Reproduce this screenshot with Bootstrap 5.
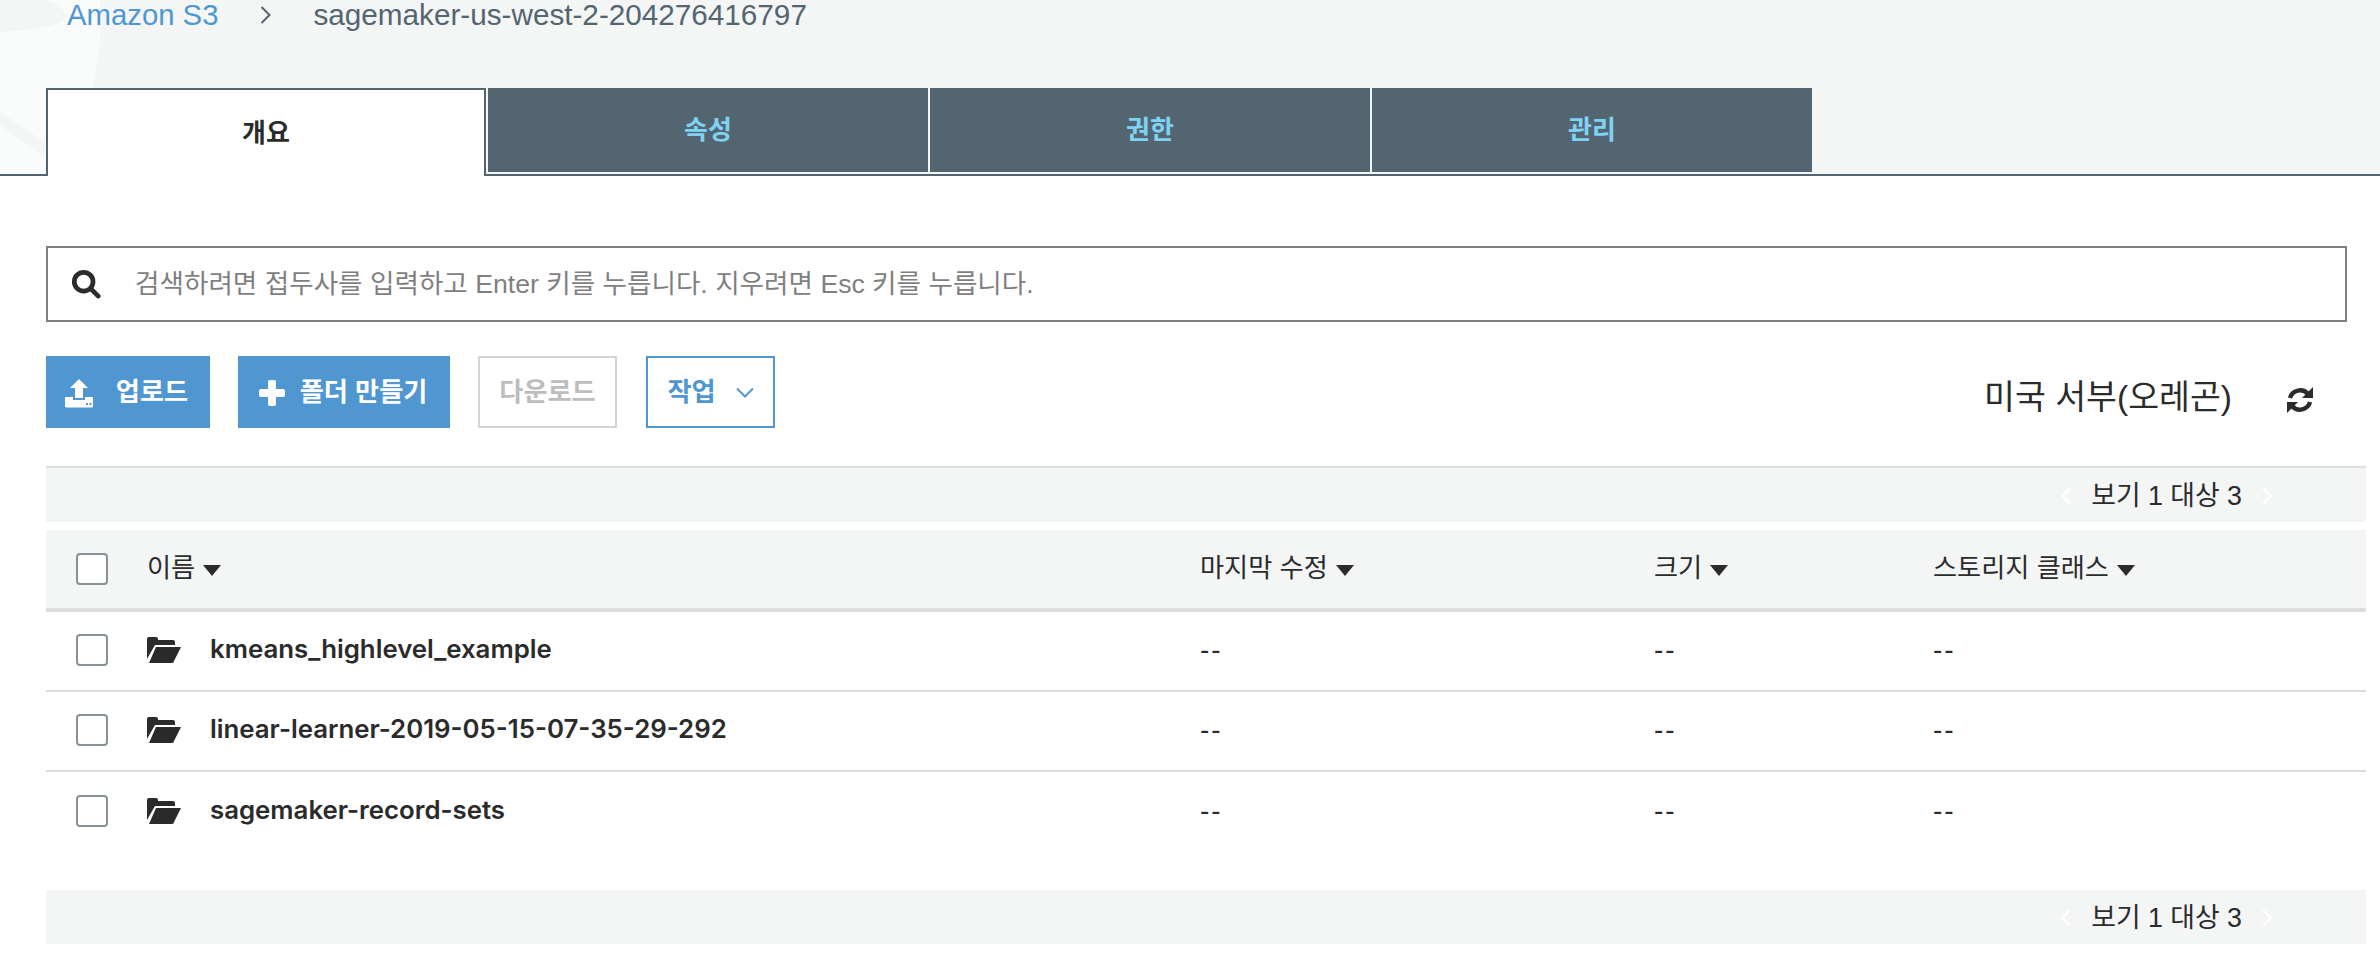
<!DOCTYPE html>
<html lang="ko">
<head>
<meta charset="utf-8">
<title>Amazon S3</title>
<link href="https://cdn.jsdelivr.net/npm/bootstrap@5.3.0/dist/css/bootstrap.min.css" rel="stylesheet">
<style>
html,body{height:964px;overflow:hidden}
body{background:#fff;color:#2b2b2b;font-family:"Liberation Sans","Noto Sans CJK KR",sans-serif;font-size:26px}
.s3-head{height:176px;background:#f4f6f6;border-bottom:2px solid #546572;position:relative}
.s3-swirl{position:absolute;left:0;top:0}
.s3-crumb{height:30px;padding-left:67px;gap:42px;font-size:29.3px;line-height:30px;color:#546572;position:relative;white-space:nowrap}
.s3-crumb a{color:#4f97d3;text-decoration:none}
.s3-bucket{font-size:29.7px}
.s3-tabs{position:absolute;left:46px;top:88px;height:86px;gap:2px}
.s3-tab{width:440px;height:84px;background:#546572;color:#7fd3f2;font-weight:700;font-size:26px;text-decoration:none}
.s3-tab.on{background:#fff;color:#2b2b2b;height:88px;border:2px solid #546572;border-bottom:0}
.s3-main{padding:70px 14px 0 46px}
.s3-search{height:76px;margin-right:19px;border:2px solid #7f7f7f;padding-left:23px;gap:34px;color:#7f7f7f;font-size:26.6px}
.s3-search span{padding-top:2px}
.s3-bar{margin-top:34px;height:72px;margin-right:19px}
.s3-btn{height:72px;border-radius:0;font-size:26.2px;font-weight:700;padding:2px 0 0;gap:15px;border:2px solid #5097d2;white-space:nowrap}
.s3-b1{width:164px;background:#5097d2;color:#fff;gap:22px;padding-right:4px}
.s3-b2{width:212px;background:#5097d2;color:#fff;margin-left:28px;padding-right:2px}
.s3-b3{width:139px;background:#fff;color:#bdbdbd;border-color:#d4d4d4;margin-left:28px}
.s3-b4{width:129px;background:#fff;color:#5097d2;margin-left:29px;gap:20px}
.s3-region{font-size:33.6px;color:#2b2b2b;margin-left:auto;margin-right:54px;margin-top:12px}
.s3-refresh{margin-right:33px;margin-top:15px}
.s3-pager{height:56px;background:#f4f6f6;border-top:2px solid #e0e0e0;margin-top:38px;padding-right:93px;gap:19px;font-size:26.8px;padding-top:2px}
.s3-pager.end{height:54px;border-top:0;margin-top:38px}
.s3-thead{height:82px;margin-top:8px;background:#f4f6f6;border-bottom:4px solid #ddd;font-size:26.2px}
.s3-row{height:80px;border-bottom:2px solid #ddd;font-size:28px;padding-bottom:3px}
.s3-row.last{border-bottom:0}
.s3-c0{width:101px;padding-left:30px}
.s3-c1{width:1053px}
.s3-c2{width:454px}
.s3-c3{width:279px}
.s3-dash{letter-spacing:2px}
.s3-check{width:32px;height:32px;border:2px solid #879196;border-radius:4px;background:#fff;display:block}
.s3-name{font-family:Inter,"Liberation Sans",sans-serif;font-weight:600;gap:29px;font-size:25.8px}
.s3-sort{display:inline-block;width:0;height:0;border-left:9.500px solid transparent;border-right:9.500px solid transparent;border-top:11px solid #2b2b2b;margin-left:8px;vertical-align:middle}
</style>
</head>
<body>
<header class="s3-head">
  <svg class="s3-swirl" width="100" height="174" viewBox="0 0 100 174"><path d="M0 32C40 30 66 24 66 16C66 8 50 0 40 0H100C104 30 98 60 92 88H46V174H0Z" fill="#fafcfc"/><path d="M0 112L46 143V158L0 125Z" fill="#f4f6f6"/></svg>
  <nav class="s3-crumb d-flex align-items-center">
    <a href="#">Amazon S3</a>
    <svg width="11" height="20" viewBox="0 0 11 20" fill="none" stroke="#546572" stroke-width="2"><path d="M1.500 2l8 8-8 8"/></svg>
    <span class="s3-bucket">sagemaker-us-west-2-204276416797</span>
  </nav>
  <div class="s3-tabs d-flex">
    <a href="#" class="s3-tab on d-flex align-items-center justify-content-center">개요</a>
    <a href="#" class="s3-tab d-flex align-items-center justify-content-center">속성</a>
    <a href="#" class="s3-tab d-flex align-items-center justify-content-center">권한</a>
    <a href="#" class="s3-tab d-flex align-items-center justify-content-center">관리</a>
  </div>
</header>
<main class="s3-main">
  <div class="s3-search d-flex align-items-center">
    <svg width="30" height="30" viewBox="0 0 32 32" fill="none" stroke="#2b2b2b"><circle cx="13.500" cy="13.500" r="10" stroke-width="5"/><path d="M21 21l8 8" stroke-width="5" stroke-linecap="round"/></svg>
    <span>검색하려면 접두사를 입력하고 Enter 키를 누릅니다. 지우려면 Esc 키를 누릅니다.</span>
  </div>
  <div class="s3-bar d-flex align-items-center">
    <button class="btn s3-btn s3-b1 d-flex align-items-center justify-content-center">
      <svg width="30" height="30" viewBox="0 0 30 30" fill="#fff"><path d="M15 1l9 9h-5v10h-8V10H6z"/><path fill-rule="evenodd" d="M1 19h8v3h12v-3h8v9a1.500 1.500 0 0 1-1.500 1.500h-25A1.500 1.500 0 0 1 1 28zM22 25h2v2h-2zM25.500 25h2v2h-2z"/></svg>
      <span>업로드</span>
    </button>
    <button class="btn s3-btn s3-b2 d-flex align-items-center justify-content-center">
      <svg width="26" height="26" viewBox="0 0 26 26" fill="#fff"><path d="M9 2a2 2 0 0 1 2-2h4a2 2 0 0 1 2 2v7h7a2 2 0 0 1 2 2v4a2 2 0 0 1-2 2h-7v7a2 2 0 0 1-2 2h-4a2 2 0 0 1-2-2v-7H2a2 2 0 0 1-2-2v-4a2 2 0 0 1 2-2h7z"/></svg>
      <span>폴더 만들기</span>
    </button>
    <button class="btn s3-btn s3-b3">다운로드</button>
    <button class="btn s3-btn s3-b4 d-flex align-items-center justify-content-center">
      <span>작업</span>
      <svg width="18" height="12" viewBox="0 0 18 12" fill="none" stroke="#5097d2" stroke-width="2"><path d="M1 1.500l8 8 8-8"/></svg>
    </button>
    <span class="s3-region">미국 서부(오레곤)</span>
    <svg width="28" height="28" viewBox="0 0 28 28" fill="none" stroke="#2b2b2b" class="s3-refresh">
      <path d="M4 12A10.500 10.500 0 0 1 22 8" stroke-width="4.500"/><path d="M27 1v11H16z" fill="#2b2b2b" stroke="none"/>
      <path d="M24 16A10.500 10.500 0 0 1 6 20" stroke-width="4.500"/><path d="M1 27V16h11z" fill="#2b2b2b" stroke="none"/>
    </svg>
  </div>
  <div class="s3-pager d-flex align-items-center justify-content-end">
    <svg width="12" height="20" viewBox="0 0 12 20" fill="none" stroke="#fff" stroke-width="2"><path d="M10 2l-8 8 8 8"/></svg>
    <span>보기 1 대상 3</span>
    <svg width="12" height="20" viewBox="0 0 12 20" fill="none" stroke="#fff" stroke-width="2"><path d="M2 2l8 8-8 8"/></svg>
  </div>
  <div class="s3-thead d-flex align-items-center">
    <div class="s3-c0"><span class="s3-check"></span></div>
    <div class="s3-c1">이름<i class="s3-sort"></i></div>
    <div class="s3-c2">마지막 수정<i class="s3-sort"></i></div>
    <div class="s3-c3">크기<i class="s3-sort"></i></div>
    <div>스토리지 클래스<i class="s3-sort"></i></div>
  </div>
  <div class="s3-row d-flex align-items-center">
    <div class="s3-c0"><span class="s3-check"></span></div>
    <div class="s3-c1 s3-name d-flex align-items-center">
      <svg width="34" height="26" viewBox="0 0 34 26" fill="#2b2b2b"><path d="M0 2a2 2 0 0 1 2-2h7a2 2 0 0 1 2 2v1h15a2 2 0 0 1 2 2v3H8L0 22z"/><path d="M9 10h25l-7 14a2 2 0 0 1-2 2H2z"/></svg>
      <span>kmeans_highlevel_example</span>
    </div>
    <div class="s3-c2 s3-dash">--</div><div class="s3-c3 s3-dash">--</div><div class="s3-dash">--</div>
  </div>
  <div class="s3-row d-flex align-items-center">
    <div class="s3-c0"><span class="s3-check"></span></div>
    <div class="s3-c1 s3-name d-flex align-items-center">
      <svg width="34" height="26" viewBox="0 0 34 26" fill="#2b2b2b"><path d="M0 2a2 2 0 0 1 2-2h7a2 2 0 0 1 2 2v1h15a2 2 0 0 1 2 2v3H8L0 22z"/><path d="M9 10h25l-7 14a2 2 0 0 1-2 2H2z"/></svg>
      <span>linear-learner-2019-05-15-07-35-29-292</span>
    </div>
    <div class="s3-c2 s3-dash">--</div><div class="s3-c3 s3-dash">--</div><div class="s3-dash">--</div>
  </div>
  <div class="s3-row last d-flex align-items-center">
    <div class="s3-c0"><span class="s3-check"></span></div>
    <div class="s3-c1 s3-name d-flex align-items-center">
      <svg width="34" height="26" viewBox="0 0 34 26" fill="#2b2b2b"><path d="M0 2a2 2 0 0 1 2-2h7a2 2 0 0 1 2 2v1h15a2 2 0 0 1 2 2v3H8L0 22z"/><path d="M9 10h25l-7 14a2 2 0 0 1-2 2H2z"/></svg>
      <span>sagemaker-record-sets</span>
    </div>
    <div class="s3-c2 s3-dash">--</div><div class="s3-c3 s3-dash">--</div><div class="s3-dash">--</div>
  </div>
  <div class="s3-pager end d-flex align-items-center justify-content-end">
    <svg width="12" height="20" viewBox="0 0 12 20" fill="none" stroke="#fff" stroke-width="2"><path d="M10 2l-8 8 8 8"/></svg>
    <span>보기 1 대상 3</span>
    <svg width="12" height="20" viewBox="0 0 12 20" fill="none" stroke="#fff" stroke-width="2"><path d="M2 2l8 8-8 8"/></svg>
  </div>
</main>
<script src="https://cdn.jsdelivr.net/npm/bootstrap@5.3.0/dist/js/bootstrap.bundle.min.js"></script>
</body>
</html>
